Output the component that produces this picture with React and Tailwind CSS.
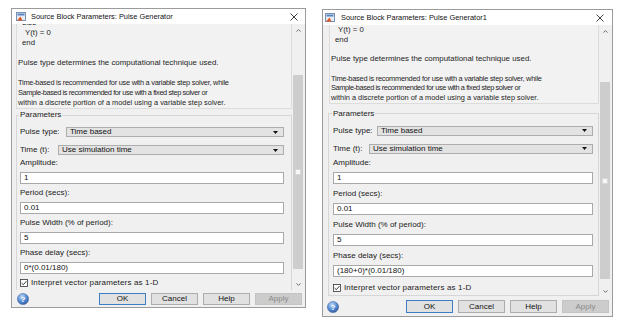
import React from "react";

const FONT = "font-['Liberation_Sans',Arial,sans-serif]";

function TitleIcon() {
  return (
    <svg width="10" height="9" viewBox="0 0 10 9" className="shrink-0">
      <rect x="0.5" y="0.5" width="9" height="8" fill="#e4ecf6" stroke="#7a93b3" />
      <rect x="1.5" y="1.5" width="7" height="2" fill="#5b86c4" />
      <path d="M1 8.5 L4.5 4.5 L6.5 8.5 Z" fill="#e0561a" />
    </svg>
  );
}

function CloseX() {
  return (
    <svg width="8" height="8" viewBox="0 0 8 8" className="ml-auto shrink-0">
      <path d="M0.5 0.5 L7.5 7.5 M7.5 0.5 L0.5 7.5" stroke="#2a2a2a" strokeWidth="0.9" />
    </svg>
  );
}

function HelpIcon({ id }) {
  return (
    <svg width="12" height="12" viewBox="0 0 12 12" className="shrink-0">
      <defs>
        <radialGradient id={id} cx="0.4" cy="0.3" r="0.75">
          <stop offset="0" stopColor="#bcd6f5" />
          <stop offset="0.55" stopColor="#5a8fd6" />
          <stop offset="1" stopColor="#2a559e" />
        </radialGradient>
      </defs>
      <circle cx="6" cy="6" r="5.6" fill={`url(#${id})`} stroke="#3a5f9a" strokeWidth="0.5" />
      <text x="6" y="9" textAnchor="middle" fontSize="8" fontWeight="bold" fill="#ffffff" fontFamily="Liberation Sans, Arial, sans-serif">?</text>
    </svg>
  );
}

function Caret() {
  return (
    <svg width="5" height="3" viewBox="0 0 5 3" className="ml-auto shrink-0">
      <path d="M0 0 H5 L2.5 3 Z" fill="#111" />
    </svg>
  );
}

function Chevron({ up }) {
  return (
    <svg width="5" height="3" viewBox="0 0 5 3">
      <path d={up ? "M0.5 2.6 L2.5 0.6 L4.5 2.6" : "M0.5 0.4 L2.5 2.4 L4.5 0.4"} stroke="#606060" strokeWidth="0.9" fill="none" />
    </svg>
  );
}

function Btn({ children, kind }) {
  const cls =
    kind === "ok"
      ? "border-[#3c7fc6] bg-[#e1e1e1] text-[#111]"
      : kind === "dis"
      ? "border-[#c4c4c4] bg-[#cccccc] text-[#8a8a8a]"
      : "border-[#adadad] bg-[#e1e1e1] text-[#111]";
  return (
    <div className={`flex items-center justify-center w-[47px] h-full border text-[8px] ${cls}`}>
      {children}
    </div>
  );
}

function Field({ label, value, c, first }) {
  return (
    <div className={`flex flex-col ${first ? c.firstLabelMt : c.fieldMt}`}>
      <div className={`text-[8px] text-[#1a1a1a] ${c.labelLead}`}>{label}</div>
      <div className={`${c.inputMt} ${c.inputH} flex items-center border border-[#a9a9a9] bg-white pl-[3px] text-[8px] text-[#111]`}>
        {value}
      </div>
    </div>
  );
}

function Dialog({ title, phase, c, helpId, showElse }) {
  return (
    <div className={`flex flex-col shrink-0 border border-[#9b9b9b] bg-[#f0f0f0] ${c.outer}`}>
      <div className={`flex items-center h-[15px] shrink-0 bg-white ${c.titlePad}`}>
        <TitleIcon />
        <span className={`${c.titleMl} text-[7.4px] leading-none text-[#111] whitespace-nowrap`}>{title}</span>
        <CloseX />
      </div>
      <div className={`flex shrink-0 ${c.upperH}`}>
        <div className="flex-1 overflow-hidden flex flex-col">
          <div className={`${c.descBox} border border-[#dcdcdc] bg-[#f2f2f2] px-[1px] pt-[1px] text-[7.4px] text-[#1e1e1e] whitespace-nowrap ${c.descLead}`}>
            {showElse && <div className="pl-[4px] text-[7.8px]">else</div>}
            <div className="pl-[7px] text-[7.8px]">Y(t) = 0</div>
            <div className="pl-[4px] text-[7.8px]">end</div>
            <div>&nbsp;</div>
            <div className="text-[7.9px]">Pulse type determines the computational technique used.</div>
            <div>&nbsp;</div>
            <div className="tracking-[-0.25px]">Time-based is recommended for use with a variable step solver, while</div>
            <div className="tracking-[-0.4px]">Sample-based is recommended for use with a fixed step solver or</div>
            <div>within a discrete portion of a model using a variable step solver.</div>
          </div>
          <fieldset className={`border border-[#d6d6d6] flex flex-col ${c.fs}`}>
            <legend className="px-[1px] -ml-[1px] text-[8px] leading-[10px] text-[#1a1a1a]">Parameters</legend>
            <div className="flex items-center h-[10px]">
              <span className={`${c.pulseW} shrink-0 text-[8px] text-[#1a1a1a]`}>Pulse type:</span>
              <div className="flex-1 h-full flex items-center border border-[#adadad] bg-[#e3e3e3] pl-[3px] pr-[5px] text-[8px] text-[#111]">
                Time based
                <Caret />
              </div>
            </div>
            <div className={`flex items-center h-[10px] ${c.ddGap}`}>
              <span className={`${c.timeW} shrink-0 text-[8px] text-[#1a1a1a]`}>Time (t):</span>
              <div className="flex-1 h-full flex items-center border border-[#adadad] bg-[#e3e3e3] pl-[3px] pr-[5px] text-[8px] text-[#111]">
                Use simulation time
                <Caret />
              </div>
            </div>
            <Field first label="Amplitude:" value="1" c={c} />
            <Field label="Period (secs):" value="0.01" c={c} />
            <Field label="Pulse Width (% of period):" value="5" c={c} />
            <Field label="Phase delay (secs):" value={phase} c={c} />
            <div className={`flex items-center h-[12px] ${c.checkMt}`}>
              <svg width="8" height="8" viewBox="0 0 8 8" className="shrink-0">
                <rect x="0.5" y="0.5" width="7" height="7" fill="#fff" stroke="#333" strokeWidth="0.8" />
                <path d="M1.6 4.1 L3.3 5.7 L6.4 2.2" stroke="#222" strokeWidth="0.9" fill="none" />
              </svg>
              <span className="ml-[3px] text-[8px] tracking-[0.15px] text-[#1a1a1a]">Interpret vector parameters as 1-D</span>
            </div>
          </fieldset>
        </div>
        <div className="w-[10px] mr-[2px] flex flex-col items-stretch">
          <div className="h-[12px] flex items-center justify-center">
            <Chevron up />
          </div>
          <div className={`${c.thumbMt} ${c.thumbH} bg-[#cdcdcd] flex items-center justify-center`}>
            <div className="w-[6px] h-[6px] bg-[#f7f7f7] border border-[#d8d8d8]" />
          </div>
          <div className="flex-1" />
          <div className="h-[12px] flex items-center justify-center">
            <Chevron />
          </div>
        </div>
      </div>
      <div className={`flex items-stretch ${c.btnRow}`}>
        <div className="flex items-center">
          <HelpIcon id={helpId} />
        </div>
        <div className="ml-auto flex gap-[5px]">
          <Btn kind="ok">OK</Btn>
          <Btn>Cancel</Btn>
          <Btn>Help</Btn>
          <Btn kind="dis">Apply</Btn>
        </div>
      </div>
    </div>
  );
}

const LEFT = {
  outer: "mt-[8px] ml-[11px] w-[295px] h-[300px]",
  titlePad: "pl-[4px] pr-[7px]",
  titleMl: "ml-[5px]",
  upperH: "h-[266px]",
  descBox: "mt-[-8px] ml-[4px] mr-[1px]",
  descLead: "leading-[10px]",
  fs: "mt-[1px] ml-[4px] mr-[1px] pl-[3px] pr-[7px] pt-[7px] pb-[1px]",
  pulseW: "w-[46px]",
  timeW: "w-[38px]",
  ddGap: "mt-[8px]",
  labelLead: "leading-[12px]",
  firstLabelMt: "mt-[2px]",
  fieldMt: "mt-[3px]",
  inputMt: "mt-[3px]",
  inputH: "h-[12px]",
  checkMt: "mt-[3px]",
  thumbMt: "mt-[39px]",
  thumbH: "h-[194px]",
  btnRow: "h-[17px] pt-[3px] pb-[2px] pl-[5px] pr-[3px]",
};

const RIGHT = {
  outer: "mt-[9px] ml-[16px] w-[291px] h-[308px]",
  titlePad: "pl-[2px] pr-[8px]",
  titleMl: "ml-[6px]",
  upperH: "h-[272px]",
  descBox: "mt-[-2px] ml-[6px] mr-[1px]",
  descLead: "leading-[9.7px]",
  fs: "mt-[5px] ml-[5px] mr-[1px] pl-[4px] pr-[5px] pt-[7px] pb-[1px]",
  pulseW: "w-[44px]",
  timeW: "w-[36px]",
  ddGap: "mt-[8px]",
  labelLead: "leading-[13px]",
  firstLabelMt: "mt-[2px]",
  fieldMt: "mt-[3px]",
  inputMt: "mt-[3px]",
  inputH: "h-[12px]",
  checkMt: "mt-[5px]",
  thumbMt: "mt-[45px]",
  thumbH: "h-[197px]",
  btnRow: "h-[19px] pt-[3px] pb-[3px] pl-[4px] pr-[3px]",
};

export default function App() {
  return (
    <div className={`w-[620px] h-[320px] bg-white flex items-start overflow-hidden ${FONT}`}>
      <Dialog title="Source Block Parameters: Pulse Generator" phase="0*(0.01/180)" c={LEFT} helpId="hg1" showElse />
      <Dialog title="Source Block Parameters: Pulse Generator1" phase="(180+0)*(0.01/180)" c={RIGHT} helpId="hg2" />
    </div>
  );
}
